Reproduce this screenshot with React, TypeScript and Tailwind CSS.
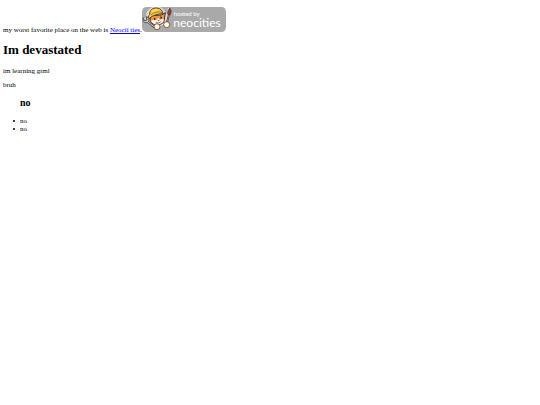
function NeocitiesBadge() {
  return (
    <svg viewBox="0 0 252 75" className="inline-block h-[25px] w-[84px] align-baseline" role="img" aria-label="Hosted by Neocities">
      <rect width="252" height="75" rx="14" fill="#a9a9a9" />

      {/* Light outline behind the cat and tools */}
      <path d="M18 26 C18 10 34 2 48 4 C62 6 66 18 70 28 L68 46 L44 56 L22 44 Z M82 8 L72 50 M10 38 L38 60" fill="#ffffff" stroke="#ffffff" strokeWidth="11" strokeLinejoin="round" strokeLinecap="round" opacity="0.6" />

      {/* Wrench */}
      <path d="M14 42 L42 64" stroke="#555555" strokeWidth="8" strokeLinecap="round" />
      <path d="M4 32 L7 41 L15 39 L13 29 C22 32 23 41 18 46 C9 50 0 44 4 32 Z" fill="#c6cace" stroke="#555555" strokeWidth="3" />
      <path d="M16 44 L40 62" stroke="#c6cace" strokeWidth="3" />

      {/* Paintbrush */}
      <path d="M81 23 L72 56" stroke="#4a322c" strokeWidth="6" strokeLinecap="round" />
      <path d="M81 23 L73 54" stroke="#d39c86" strokeWidth="2" strokeLinecap="round" />
      <path d="M77 22 C76 14 79 7 84 3 C89 10 88 18 84 24 Z" fill="#8f3d47" stroke="#4a322c" strokeWidth="2" />

      {/* Cat head */}
      <path d="M25 26 L24 40 C29 51 39 55 48 53 C61 52 67 46 67 37 L70 17 L58 24 Z" fill="#ed9445" stroke="#3b2a26" strokeWidth="3" strokeLinejoin="round" />
      <path d="M27 41 C31 38 38 39 44 40 L49 32 L53 39 C59 35 65 36 65 38 C65 47 56 51 48 51 C38 53 30 49 27 41 Z" fill="#fff9f0" />

      {/* Hard hat */}
      <path d="M23 23 C22 9 32 2 45 3 C56 4 62 11 63 20 C50 20 34 24 22 34 C17 33 17 27 23 23 Z" fill="#f4c649" stroke="#5d4120" strokeWidth="3" strokeLinejoin="round" />
      <path d="M27 23 C37 16 48 13 60 16" fill="none" stroke="#b17c25" strokeWidth="3" />
      <path d="M31 13 C35 8 41 7 46 8" fill="none" stroke="#ffe58b" strokeWidth="3" strokeLinecap="round" />

      {/* Face */}
      <ellipse cx="38" cy="36" rx="2" ry="4" fill="#2a2020" />
      <ellipse cx="57" cy="32" rx="2" ry="4" fill="#2a2020" />
      <path d="M46 40 L53 39 L50 43 Z" fill="#7d3a30" />
      <path d="M41 45 C46 49 54 48 58 43" fill="none" stroke="#5d4a40" strokeWidth="2" />

      {/* Paws */}
      <circle cx="45" cy="59" r="9" fill="#fff9f0" stroke="#8a5a34" strokeWidth="3" />
      <circle cx="74" cy="53" r="9" fill="#fff9f0" stroke="#8a5a34" strokeWidth="3" />

      <text x="95" y="27" fill="#ffffff" fontSize="18" fontFamily="Lato, sans-serif">hosted by</text>
      <text x="94" y="61" fill="#ffffff" fontSize="36" fontFamily="Lato, sans-serif">neocities</text>
    </svg>
  );
}

export default function App() {
  const items = ['no', 'no'];

  return (
    <main className="px-[3px] pt-[7px] font-['Liberation_Serif',serif] text-[7px] leading-[8px] text-black">
      <p>
        my worst favorite place on the web is{' '}
        <a href="https://neocities.org" className="text-[#0000ee] underline">Neocii ties</a>.
        <NeocitiesBadge />
      </p>
      <h1 className="mt-2 text-[13px] leading-4 font-bold">Im devastated</h1>
      <p className="mt-[9px]">im learning gtml</p>
      <p className="mt-[6px]">bruh</p>
      <h2 className="mt-2 pl-[17px] text-[10px] leading-3 font-bold">no</h2>
      <ul className="mt-2 pl-[10px]">
        {items.map((item, index) => (
          <li key={index} className="flex items-center gap-[5px] before:size-[2px] before:rounded-full before:bg-black">
            {item}
          </li>
        ))}
      </ul>
    </main>
  );
}
